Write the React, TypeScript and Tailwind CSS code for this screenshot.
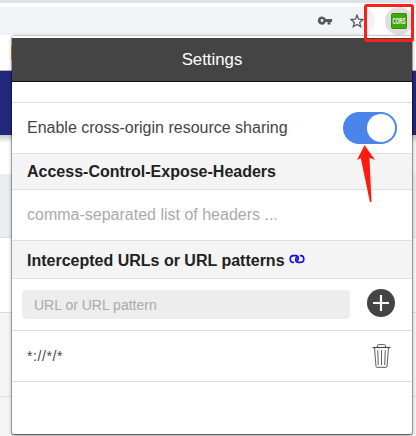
import React from "react";

function BrowserBar() {
  return (
    <div className="h-[35px] bg-white">
      <div className="h-[3px] bg-[#dee1e6]" />
      <div className="mt-1 flex h-7">
        <div className="flex h-7 w-[375px] items-center rounded-r-full bg-[#f1f3f4]">
          <svg className="ml-[317px] h-4 w-4" viewBox="0 0 16 16">
            <path
              d="M5 3.4a4.1 4.1 0 1 0 3.8 5.6h1.7v2.6h3V9h1.6V6.1H8.8A4.1 4.1 0 0 0 5 3.4zm0 2.7a1.4 1.4 0 1 1 0 2.8 1.4 1.4 0 0 1 0-2.8z"
              fill="#55595e"
              fillRule="evenodd"
            />
          </svg>
          <svg className="ml-[17px] h-[14px] w-[14px] shrink-0" viewBox="0 0 14 14">
            <path
              d="M7 1.2l1.6 4 4.4.4-3.3 2.8 1 4.3L7 10.4l-3.7 2.3 1-4.3L1 5.6l4.4-.4z"
              fill="none"
              stroke="#55595e"
              strokeWidth="1.3"
            />
          </svg>
        </div>
        <div className="ml-[10px] flex h-7 w-7 items-center justify-center rounded-full bg-[#dfdfdf]">
          <svg className="h-4 w-4 shrink-0" viewBox="0 0 16 16">
            <rect width="16" height="16" rx="2" fill="#2f8d0b" />
            <rect x="1" y="1" width="14" height="14" rx="1" fill="#45a50c" />
            <text
              transform="translate(1.6 11) scale(.49 1)"
              fontFamily="Liberation Sans, sans-serif"
              fontSize="9"
              fontWeight="700"
              fill="#ffffff"
            >
              CORS
            </text>
          </svg>
        </div>
      </div>
    </div>
  );
}

function PageBehind() {
  return (
    <div>
      <div className="h-[35px] bg-white">
        <div className="flex h-full items-start pt-[11px] pl-[11px]">
          <div className="h-[14px] w-1 bg-[#d9b23c]" />
        </div>
      </div>
      <div className="h-[65px] border-t border-[#b0b0b0] bg-[#22277c]" />
      <div className="flex h-[39px] justify-between bg-gradient-to-b from-[#c8c8c8] via-white via-20% to-white">
        <div />
        <div className="w-1 bg-gradient-to-b from-[#c4c4c4] via-[#f5f5f5] via-20% to-[#f5f5f5]" />
      </div>
      <div className="h-16 border-b border-[#d9dce0] bg-[#e9ecf1]" />
      <div className="flex h-[75px] justify-between border-b border-[#dddddd] bg-white">
        <div />
        <div className="w-1 bg-[#f7f7f7]" />
      </div>
      <div className="h-[84px] border-b border-[#dddddd] bg-[#f5f5f5]" />
      <div className="h-[39px] bg-[#f5f5f5]" />
    </div>
  );
}

function Toggle() {
  return (
    <div className="flex h-8 w-[54px] items-center justify-end rounded-full bg-[#4a86ea] pr-0.5">
      <div className="h-7 w-7 rounded-full bg-white" />
    </div>
  );
}

function LinkIcon() {
  return (
    <svg className="mb-[3px] ml-1 h-[10px] w-4" viewBox="0 0 16 10">
      <g fill="none" stroke="#1510d4" strokeWidth="1.6">
        <path d="M5 8.4H4Q1.2 8.2 1.2 5T4.2 1.6H6.8Q9.3 1.8 9.3 4.2T7.4 6.6" />
        <path d="M11 1.6h1Q14.8 1.8 14.8 5T11.8 8.4H9.2Q6.7 8.2 6.7 5.8T8.6 3.4" />
      </g>
    </svg>
  );
}

function TrashIcon() {
  return (
    <svg className="h-6 w-[19px]" viewBox="0 0 19 24">
      <g fill="none" stroke="#4b4b4b">
        <path d="M.5 3.5h18" strokeWidth="1.2" />
        <path d="M5.5 3.5V1.8q0-1.2 1.2-1.2h5.6q1.2 0 1.2 1.2v1.7" strokeWidth=".9" />
        <path d="M2.5 4l1.5 18.3q.1 1 1 1h9q.9 0 1-1L16.5 4" strokeWidth=".9" />
        <path d="M5.7 6.2l.6 14.8M9.5 6.2V21M13.3 6.2L12.7 21" strokeWidth=".9" />
      </g>
    </svg>
  );
}

function SettingsPopup() {
  return (
    <div className="absolute top-[35px] left-3 flex h-[399px] w-[400px] flex-col rounded-[2px] border-t border-[#c9caca] bg-white text-[16px] text-[#444444] shadow-[-1px_1px_0_0_rgba(0,0,0,0.28),1px_1px_0_0_rgba(0,0,0,0.28),0_2px_4px_rgba(0,0,0,0.35)]">
      <div className="mt-0.5 flex h-11 items-center justify-center border-b border-[#111111] bg-[#444444] text-[16.8px] text-white">
        Settings
      </div>
      <div className="h-[21px] border-b border-[#dddddd]" />
      <div className="flex h-[51px] items-center justify-between border-b border-[#dddddd] pr-[15px] pl-[15px]">
        <span>Enable cross-origin resource sharing</span>
        <Toggle />
      </div>
      <div className="flex h-9 items-center border-b border-[#dddddd] bg-[#f4f4f4] pl-[15px] font-bold text-[#222222]">
        Access-Control-Expose-Headers
      </div>
      <div className="flex h-[51px] items-center border-b border-[#dddddd] pl-[15px] text-[#aaaaaa]">
        comma-separated list of headers ...
      </div>
      <div className="flex h-[38px] items-center border-b border-[#dddddd] bg-[#f4f4f4] pt-0.5 pl-[15px] font-bold text-[#222222]">
        <span>Intercepted URLs or URL patterns</span>
        <LinkIcon />
      </div>
      <div className="flex h-[52px] items-center border-b border-[#dddddd] pl-[10px]">
        <div className="flex h-[29px] w-[328px] items-center rounded-[4px] bg-[#ededed] pt-0.5 pl-3 text-[14px] text-[#aaaaaa]">
          URL or URL pattern
        </div>
        <svg className="mb-1 ml-[17px] h-7 w-7" viewBox="0 0 28 28">
          <circle cx="14" cy="14" r="14" fill="#444444" />
          <path d="M14 6v16M6 14h16" stroke="#ffffff" strokeWidth="2.2" />
        </svg>
      </div>
      <div className="flex h-[51px] items-center justify-between border-b border-[#dddddd] pr-[21px] pl-[15px]">
        <span className="text-[14px] tracking-[0.6px]">*://*/*</span>
        <TrashIcon />
      </div>
    </div>
  );
}

export default function App() {
  return (
    <div className="relative h-[436px] w-[416px] overflow-hidden bg-white font-['Liberation_Sans',Arial,sans-serif]">
      <BrowserBar />
      <PageBehind />
      <SettingsPopup />
      <div className="absolute top-1 left-[364px] h-[38px] w-[50px] rounded-[3px] border-[3px] border-[#fc2018]" />
      <svg className="absolute top-[145px] left-[356px] h-[58px] w-[20px]" viewBox="0 0 20 58">
        <path d="M8.5 0L19 15l-5.5-2.3L15.5 57h-1.6L4.8 13.2 1 15z" fill="#fc1d12" />
      </svg>
    </div>
  );
}
